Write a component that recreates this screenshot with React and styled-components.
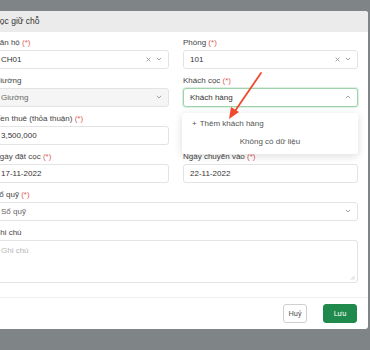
import React from "react";
import styled, { createGlobalStyle } from "styled-components";

const GlobalStyle = createGlobalStyle`
  html, body {
    margin: 0;
    padding: 0;
    background: #7f8487;
    overflow: hidden;
  }
  * { box-sizing: border-box; }
`;

const Page = styled.div`
  position: relative;
  width: 370px;
  height: 350px;
  padding-top: 11px;
  overflow: hidden;
  background: #7f8487;
  font-family: "Liberation Sans", "Noto Sans", Arial, sans-serif;
  font-size: 8px;
  color: #333;
`;

const Modal = styled.div`
  margin-left: -20px;
  width: 388px;
  height: 318px;
  background: #fff;
  border-radius: 3px;
  display: flex;
  flex-direction: column;
`;

const Header = styled.div`
  height: 21px;
  display: flex;
  align-items: center;
  background: #ebebeb;
  border-radius: 3px 3px 0 0;
  font-size: 8.5px;
  color: #333;
`;

const Body = styled.div`
  position: relative;
  display: grid;
  grid-template-columns: 175px 175px;
  column-gap: 14px;
  row-gap: 6px;
  padding: 5px 10px 14px 14px;
`;

const Field = styled.div`
  position: relative;
  display: flex;
  flex-direction: column;
  grid-column: ${(p) => (p.$wide ? "1 / span 2" : "auto")};
`;

const Label = styled.div`
  height: 12px;
  line-height: 12px;
  margin-bottom: 1px;
  color: #444;
  white-space: nowrap;
`;

const Req = styled.span`
  color: #e25b5b;
`;

const Control = styled.div`
  height: 19px;
  display: flex;
  align-items: center;
  padding: 0 6px;
  border: 1px solid ${(p) => (p.$focus ? "#9dd3ad" : "#e3e3e3")};
  border-radius: 3px;
  background: ${(p) => (p.$disabled ? "#f5f5f5" : "#fff")};
  box-shadow: ${(p) => (p.$focus ? "0 0 0 1px rgba(157, 211, 173, 0.35)" : "none")};
  color: ${(p) => (p.$placeholder ? "#666" : "#333")};
`;

const Value = styled.span`
  flex: 1;
  white-space: nowrap;
`;

const Icons = styled.span`
  display: flex;
  align-items: center;
  gap: 5px;
  color: #999;
`;

const TextArea = styled.div`
  height: 43px;
  position: relative;
  padding: 5px 6px;
  border: 1px solid #e3e3e3;
  border-radius: 3px;
  color: #b5b5b5;
`;

const Grip = styled.svg`
  position: absolute;
  right: 2px;
  bottom: 2px;
`;

const Dropdown = styled.div`
  position: absolute;
  top: 38px;
  left: -1px;
  width: 176px;
  height: 41px;
  background: #fff;
  border-radius: 3px;
  box-shadow: 0 2px 8px rgba(0, 0, 0, 0.14);
  z-index: 2;
`;

const AddItem = styled.div`
  display: flex;
  align-items: center;
  gap: 3px;
  height: 22px;
  padding: 0 10px;
  color: #555;
`;

const Empty = styled.div`
  text-align: center;
  color: #555;
  line-height: 14px;
`;

const Footer = styled.div`
  margin-top: auto;
  height: 33px;
  border-top: 1px solid #eeeeee;
  display: flex;
  align-items: center;
  justify-content: flex-end;
  gap: 16px;
  padding-right: 11px;
`;

const Button = styled.button`
  height: 19px;
  width: ${(p) => (p.$primary ? "34px" : "24px")};
  padding: 0;
  border-radius: 3px;
  font-family: "Roboto", "Noto Sans", sans-serif;
  font-size: 7.5px;
  border: 1px solid ${(p) => (p.$primary ? "#1f8a4c" : "#cfcfcf")};
  background: ${(p) => (p.$primary ? "#1f8a4c" : "#fff")};
  color: ${(p) => (p.$primary ? "#fff" : "#555")};
`;

const Arrow = styled.svg`
  position: absolute;
  left: 0;
  top: 0;
  pointer-events: none;
  z-index: 5;
`;

const Chevron = ({ up }) => (
  <svg width="6" height="4" viewBox="0 0 6 4">
    <path
      d={up ? "M0.8 3.2 L3 1 L5.2 3.2" : "M0.8 0.8 L3 3 L5.2 0.8"}
      fill="none"
      stroke="#999"
      strokeWidth="0.9"
    />
  </svg>
);

const Clear = () => (
  <svg width="5" height="5" viewBox="0 0 5 5">
    <path d="M0.6 0.6 L4.4 4.4 M4.4 0.6 L0.6 4.4" stroke="#999" strokeWidth="0.9" />
  </svg>
);

const Select = ({ value, placeholder, clear, up, disabled, focus }) => (
  <Control $disabled={disabled} $focus={focus} $placeholder={!!placeholder}>
    <Value>{value || placeholder}</Value>
    <Icons>
      {clear && <Clear />}
      <Chevron up={up} />
    </Icons>
  </Control>
);

export default function App() {
  return (
    <Page>
      <GlobalStyle />
      <Modal>
        <Header>Đặt cọc giữ chỗ</Header>
        <Body>
          <Field>
            <Label>
              Căn hộ <Req>(*)</Req>
            </Label>
            <Select value="CH01" clear />
          </Field>
          <Field>
            <Label>
              Phòng <Req>(*)</Req>
            </Label>
            <Select value="101" clear />
          </Field>

          <Field>
            <Label>Giường</Label>
            <Select placeholder="Giường" disabled />
          </Field>
          <Field>
            <Label>
              Khách cọc <Req>(*)</Req>
            </Label>
            <Select value="Khách hàng" up focus />
            <Dropdown>
              <AddItem>
                <span>+</span>
                <span>Thêm khách hàng</span>
              </AddItem>
              <Empty>Không có dữ liệu</Empty>
            </Dropdown>
          </Field>

          <Field>
            <Label>
              Tiền thuê (thỏa thuận) <Req>(*)</Req>
            </Label>
            <Control>
              <Value>3,500,000</Value>
            </Control>
          </Field>
          <div />

          <Field>
            <Label>
              Ngày đặt cọc <Req>(*)</Req>
            </Label>
            <Control>
              <Value>17-11-2022</Value>
            </Control>
          </Field>
          <Field>
            <Label>
              Ngày chuyển vào <Req>(*)</Req>
            </Label>
            <Control>
              <Value>22-11-2022</Value>
            </Control>
          </Field>

          <Field $wide>
            <Label>
              Sổ quỹ <Req>(*)</Req>
            </Label>
            <Select placeholder="Sổ quỹ" />
          </Field>

          <Field $wide>
            <Label>Ghi chú</Label>
            <TextArea>
              Ghi chú
              <Grip width="5" height="5" viewBox="0 0 5 5">
                <path d="M4.5 1 L1 4.5 M4.5 3 L3 4.5" stroke="#aaa" strokeWidth="0.6" />
              </Grip>
            </TextArea>
          </Field>
        </Body>
        <Footer>
          <Button>Huỷ</Button>
          <Button $primary>Lưu</Button>
        </Footer>
      </Modal>
      <Arrow width="370" height="350" viewBox="0 0 370 350">
        <line x1="261" y1="73" x2="235" y2="111" stroke="#f04a2e" strokeWidth="1.8" strokeLinecap="round" />
        <polygon points="229,119 231,107 239,112" fill="#f04a2e" />
      </Arrow>
    </Page>
  );
}
